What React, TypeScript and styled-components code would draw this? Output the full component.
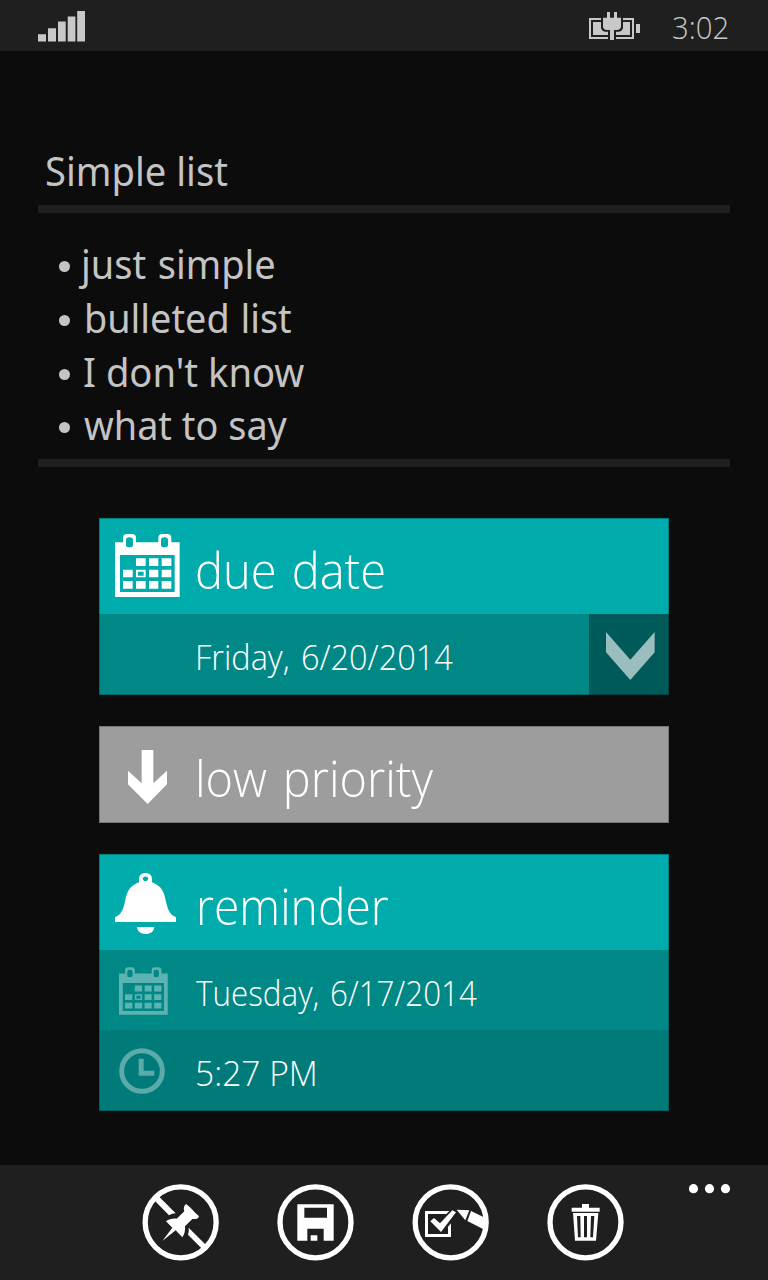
import React from "react";
import styled, { createGlobalStyle } from "styled-components";

const GlobalStyle = createGlobalStyle`
  * { box-sizing: border-box; }
  body { margin: 0; background: #0c0c0c; }
`;

const Screen = styled.div`
  width: 768px;
  height: 1280px;
  display: flex;
  flex-direction: column;
  overflow: hidden;
  background: #0c0c0c;
  color: #fff;
  font-family: "Open Sans", "Noto Sans", sans-serif;
`;

const StatusBar = styled.header`
  height: 51px;
  flex: none;
  display: flex;
  justify-content: space-between;
  padding: 11px 39px 0 38px;
  background: #1f1f1f;
  color: #c8c8c8;
`;

const StatusRight = styled.div`
  display: flex;
  gap: 31px;
`;

const Icon = styled.svg<{ $w: number; $h: number }>`
  display: block;
  flex: none;
  width: ${(p) => p.$w}px;
  height: ${(p) => p.$h}px;
  fill: currentColor;
`;

const Label = styled.span<{
  $size: number;
  $stretch?: number;
  $weight?: number;
  $drop?: number;
  $indent?: number;
  $gap?: number;
}>`
  display: block;
  white-space: nowrap;
  font-size: ${(p) => p.$size}px;
  font-weight: ${(p) => p.$weight ?? 300};
  word-spacing: ${(p) => p.$gap ?? 0}px;
  padding-top: ${(p) => p.$drop ?? 0}px;
  margin-left: ${(p) => p.$indent ?? 0}px;
  transform: scaleX(${(p) => p.$stretch ?? 1});
  transform-origin: left center;
`;

const Clock = styled.time`
  width: 57px;
  line-height: 32px;
`;

const Content = styled.main`
  flex: 1;
  padding: 94px 38px 0;
`;

const NoteBlock = styled.section`
  color: #c4c4c4;
  font-family: "Noto Sans", "Open Sans", sans-serif;
`;

const NoteTitle = styled.h1`
  height: 60px;
  margin: 0;
  padding-left: 7px;
  line-height: 52px;
  font-weight: 400;
`;

const Rule = styled.hr`
  height: 8px;
  margin: 0;
  border: 0;
  background: #1f1f1f;
`;

const BulletList = styled.ul`
  height: 246px;
  margin: 0;
  padding: 25px 0 0 21px;
  list-style: none;
`;

const BulletItem = styled.li`
  display: flex;
  align-items: flex-start;
  height: 53.8px;
  line-height: 52px;

  &::before {
    content: "";
    width: 11px;
    height: 11px;
    margin: 23px 14px 0 0;
    border-radius: 50%;
    background: #c4c4c4;
  }
`;

const Cards = styled.section`
  display: flex;
  flex-direction: column;
  gap: 31px;
  padding: 51px 61px 0;
`;

const Card = styled.article`
  position: relative;

  &::after {
    content: "";
    position: absolute;
    inset: 0;
    box-shadow: inset 0 0 0 1px rgba(0, 0, 0, 0.24);
    pointer-events: none;
  }
`;

const Row = styled.div<{ $bg: string; $h: number }>`
  display: flex;
  height: ${(p) => p.$h}px;
  line-height: ${(p) => p.$h}px;
  background: ${(p) => p.$bg};
`;

const IconSlot = styled.div<{ $top?: number; $left?: number; $faded?: boolean }>`
  flex: none;
  width: 96px;
  padding: ${(p) => p.$top ?? 0}px 0 0 ${(p) => p.$left ?? 0}px;
  color: ${(p) => (p.$faded ? "rgba(255,255,255,0.36)" : "#fff")};
`;

const Toggle = styled.button`
  display: flex;
  align-items: flex-start;
  width: 80px;
  margin: 0 0 0 auto;
  padding: 18px 0 0 17px;
  border: 0;
  background: #005a59;
  color: #9abdbd;
`;

const AppBar = styled.footer`
  display: flex;
  flex: none;
  height: 115px;
  padding: 19px 37px 0 142px;
  background: #1f1f1f;
`;

const Actions = styled.nav`
  display: flex;
  gap: 58px;
`;

const Action = styled.button`
  height: 77px;
  padding: 0;
  border: 0;
  background: none;
  color: #fff;
`;

const MoreButton = styled.button`
  margin-left: auto;
  height: 10px;
  padding: 0;
  border: 0;
  background: none;
  color: #fff;
`;

const Signal = () => (
  <Icon $w={48} $h={31} viewBox="0 0 48 31">
    <path d="M0 23.3h8V30.500H0zM10 17.300h8V30.500h-8zM20 10.500h7.700V30.500H20zM29.700 5.500h7.700V30.500h-7.700zM39.200 0H47V30.500h-7.800z" />
  </Icon>
);

const Battery = () => (
  <Icon $w={52} $h={29} viewBox="57 33 156 87">
    <path d="M57 54H93V60H63V111H114V117H57zM159 54H192V117H138V111H186V60H159z" />
    <path d="M69 66H93V84Q95 93 105 95H114V105H69zM180 66H159V84Q157 93 147 95H138V105H180z" />
    <path d="M111 36H120V53H132V36H141V53H153V81Q150 90 141 90H132V120H120V90H111Q101 90 99 81V53H111zM198 72H210V99H198z" />
  </Icon>
);

const Calendar = ({ w, h }: { w: number; h: number }) => (
  <Icon $w={w} $h={h} viewBox="60 72 195 189">
    <path
      fillRule="evenodd"
      d="M60 97H84V84Q84 72 96 72H111Q123 72 123 84V97H190V84Q190 72 202 72H217Q229 72 229 84V97H254V261H60zM75 135V246H239V135zM93 90V104Q93 112 103.500 112T114 104V90Q114 82 103.500 82T93 90zM198 90V104Q198 112 208.500 112T219 104V90Q219 82 208.500 82T198 90z"
    />
    <path
      fillRule="evenodd"
      d="M123 145H152V168H123zM162 145H190V168H162zM200 145H229V168H200zM84 179H113V202H84zM123 179H152V202H123zM129 185V197H146V185zM162 179H190V202H162zM200 179H229V202H200zM84 213H113V236H84zM123 213H152V236H123zM162 213H190V236H162zM200 213H229V236H200z"
    />
  </Icon>
);

const Bell = () => (
  <Icon $w={61} $h={61.5} viewBox="60 69 183 184.500">
    <path
      fillRule="evenodd"
      d="M60 216V201C78 195 84 180 90 155C96 125 103 108 132 97V87C132 75 141 69 151.500 69S171 75 171 87V97C200 108 207 125 213 155C219 180 225 195 243 201V216zM151.500 79.500C146 79.500 143.500 82.500 143.500 86S146 93 151.500 93S159.500 89.500 159.500 86S157 79.500 151.500 79.500z"
    />
    <path d="M126 231H178C176 246 165 252 152 252S128 246 126 231z" />
  </Icon>
);

const ArrowDown = () => (
  <Icon $w={39} $h={54} viewBox="98 90 117 162">
    <path d="M139 90H174V190L215 152V193L157 252L98 193V152L139 190z" />
  </Icon>
);

const Chevron = () => (
  <Icon $w={49} $h={48} viewBox="138 96 147 144">
    <path d="M138 96L211 179L284 96V157L211 240L138 157z" />
  </Icon>
);

const ClockFace = () => (
  <Icon $w={46} $h={46} viewBox="73 310 138 138">
    <circle cx="142" cy="379" r="61" fill="none" stroke="currentColor" strokeWidth="15" />
    <path d="M132 342H147V378H179V393H132z" />
  </Icon>
);

const Ring = ({ cx }: { cx: number }) => (
  <circle cx={cx} cy="187" r="106.500" fill="none" stroke="currentColor" strokeWidth="16" />
);

const UnpinIcon = () => (
  <Icon $w={77} $h={77} viewBox="36 72 231 231">
    <Ring cx={152} />
    <path d="M70 118L83 106L137 160Q126 160 117 166zM176 203L231 258L219 269L174 224Q178 214 176 203z" />
    <path d="M168 132C173 137 178 139 183 145L197 160C200 163 205 165 207 170C203 177 195 178 187 177L165 199C166 212 164 223 157 232L137 211L97 243L127 203L108 184C117 177 128 175 140 176L163 154C160 146 161 138 168 132z" />
  </Icon>
);

const SaveIcon = () => (
  <Icon $w={77} $h={77} viewBox="441 72 231 231">
    <Ring cx={556.5} />
    <path
      fillRule="evenodd"
      d="M502 133H611V242H581V206H532V242H502zM523 143V173H591V143zM542 226H562V242H542z"
    />
  </Icon>
);

const ChecklistIcon = () => (
  <Icon $w={77} $h={77} viewBox="36 72 231 231">
    <Ring cx={152} />
    <path d="M75 153H148L139 162H84V222H144V200L153 190V231H75z" />
    <path d="M91 184L102 174L120 190L157 151L168 157L123 216z" />
    <path d="M170 149L208 151L196 181zM213 153L255 173V210L202 183z" />
  </Icon>
);

const TrashIcon = () => (
  <Icon $w={77} $h={77} viewBox="441 72 231 231">
    <Ring cx={556.5} />
    <path
      fillRule="evenodd"
      d="M546 132H567V143H599V155H515V143H546zM519 159H595L588 242H525zM531 168L534 232H542L541 168zM552 168V232H561V168zM573 168L571 232H579L583 168z"
    />
  </Icon>
);

const Dots = () => (
  <Icon $w={42} $h={10} viewBox="0 0 42 10">
    <circle cx="4.500" cy="4.700" r="4.600" />
    <circle cx="20.500" cy="4.700" r="4.600" />
    <circle cx="36.500" cy="4.700" r="4.600" />
  </Icon>
);

const items = [
  { text: "just simple", stretch: 0.96, indent: -3, gap: 2 },
  { text: "bulleted list", stretch: 0.957, indent: 0, gap: 1 },
  { text: "I don't know", stretch: 0.967, indent: -1, gap: 0 },
  { text: "what to say", stretch: 0.958, indent: 0, gap: 0 },
];

export default function App() {
  return (
    <Screen>
      <GlobalStyle />
      <StatusBar>
        <Signal />
        <StatusRight>
          <Battery />
          <Clock>
            <Label $size={32} $stretch={0.915}>3:02</Label>
          </Clock>
        </StatusRight>
      </StatusBar>
      <Content>
        <NoteBlock>
          <NoteTitle>
            <Label $size={39.5} $weight={400} $stretch={0.966}>Simple list</Label>
          </NoteTitle>
          <Rule />
          <BulletList>
            {items.map((item) => (
              <BulletItem key={item.text}>
                <Label
                  $size={39.5}
                  $weight={400}
                  $stretch={item.stretch}
                  $indent={item.indent}
                  $gap={item.gap}
                >
                  {item.text}
                </Label>
              </BulletItem>
            ))}
          </BulletList>
          <Rule />
        </NoteBlock>
        <Cards>
          <Card>
            <Row $bg="#00abab" $h={96}>
              <IconSlot $top={16} $left={16}><Calendar w={65} h={63} /></IconSlot>
              <Label $size={50} $drop={4} $stretch={0.941} $gap={3}>due date</Label>
            </Row>
            <Row $bg="#008886" $h={81}>
              <IconSlot />
              <Label $size={35.5} $drop={2} $stretch={0.915} $gap={3}>Friday, 6/20/2014</Label>
              <Toggle aria-label="expand"><Chevron /></Toggle>
            </Row>
          </Card>
          <Card>
            <Row $bg="#9d9d9d" $h={97}>
              <IconSlot $top={24} $left={29}><ArrowDown /></IconSlot>
              <Label $size={50} $drop={4} $stretch={0.937} $gap={4}>low priority</Label>
            </Row>
          </Card>
          <Card>
            <Row $bg="#00abab" $h={96}>
              <IconSlot $top={19} $left={16}><Bell /></IconSlot>
              <Label $size={50} $drop={4} $stretch={0.924} $indent={1}>reminder</Label>
            </Row>
            <Row $bg="#008886" $h={80}>
              <IconSlot $top={17} $left={20} $faded><Calendar w={49} h={48} /></IconSlot>
              <Label $size={35.5} $drop={2} $stretch={0.884} $indent={1} $gap={3}>Tuesday, 6/17/2014</Label>
            </Row>
            <Row $bg="#007b79" $h={81}>
              <IconSlot $top={18} $left={20} $faded><ClockFace /></IconSlot>
              <Label $size={35.5} $drop={2} $stretch={0.945}>5:27 PM</Label>
            </Row>
          </Card>
        </Cards>
      </Content>
      <AppBar>
        <Actions>
          <Action aria-label="unpin"><UnpinIcon /></Action>
          <Action aria-label="save"><SaveIcon /></Action>
          <Action aria-label="checklist"><ChecklistIcon /></Action>
          <Action aria-label="delete"><TrashIcon /></Action>
        </Actions>
        <MoreButton aria-label="more"><Dots /></MoreButton>
      </AppBar>
    </Screen>
  );
}
